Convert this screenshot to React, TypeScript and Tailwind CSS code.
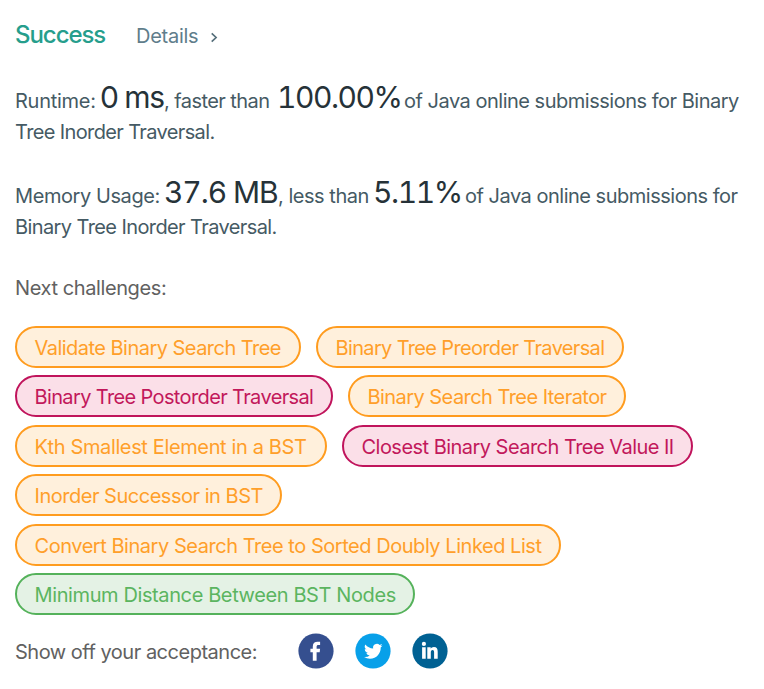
import React from "react";

type Level = "medium" | "hard" | "easy";

const tone: Record<Level, string> = {
  medium: "border-[#ff9c1f] bg-[#fff0dc] text-[#ff9f2a]",
  hard: "border-[#c0145c] bg-[#fbdfe8] text-[#c2185b]",
  easy: "border-[#55b25b] bg-[#e4f2e5] text-[#5bb560]",
};

type Challenge = { label: string; level: Level; size: string };

const rows: { height: string; items: Challenge[] }[] = [
  {
    height: "h-[49px]",
    items: [
      { label: "Validate Binary Search Tree", level: "medium", size: "w-[286px] tracking-[-0.53px]" },
      { label: "Binary Tree Preorder Traversal", level: "medium", size: "w-[308px] tracking-[-0.65px]" },
    ],
  },
  {
    height: "h-[50px]",
    items: [
      { label: "Binary Tree Postorder Traversal", level: "hard", size: "w-[318px] tracking-[-0.63px]" },
      { label: "Binary Search Tree Iterator", level: "medium", size: "w-[278px] tracking-[-0.55px]" },
    ],
  },
  {
    height: "h-[49px]",
    items: [
      { label: "Kth Smallest Element in a BST", level: "medium", size: "w-[312px] tracking-[-0.37px]" },
      { label: "Closest Binary Search Tree Value II", level: "hard", size: "w-[351px] tracking-[-0.53px]" },
    ],
  },
  {
    height: "h-[50px]",
    items: [{ label: "Inorder Successor in BST", level: "medium", size: "w-[267px] tracking-[-0.48px]" }],
  },
  {
    height: "h-[49px]",
    items: [
      {
        label: "Convert Binary Search Tree to Sorted Doubly Linked List",
        level: "medium",
        size: "w-[546px] tracking-[-0.46px]",
      },
    ],
  },
  {
    height: "h-[42px]",
    items: [{ label: "Minimum Distance Between BST Nodes", level: "easy", size: "w-[400px] tracking-[-0.39px]" }],
  },
];

export default function App() {
  return (
    <main className="h-[689px] w-[764px] overflow-hidden bg-white pl-[15px] pt-[20px] font-['Inter',sans-serif] text-[20px] leading-[31px] tracking-[-0.27px] whitespace-nowrap text-[#455a64]">
      <header className="flex h-[30px] items-baseline">
        <span className="w-[121px] text-[24px] leading-[30px] font-medium tracking-[-1.05px] text-[#269e8c]">Success</span>
        <span className="w-[74px] leading-[30px] text-[#607d8b]">Details</span>
        <svg width="8" height="11" viewBox="0 0 8 12" fill="none" stroke="#546e7a" strokeWidth="1.8">
          <path d="M1.5 1.5 6.3 6 1.5 10.5" />
        </svg>
      </header>

      <p className="mt-[31px] h-[67px]">
        <span className="flex h-[36px] items-baseline leading-[33px]">
          <span className="w-[85px]">Runtime:</span>
          <span className="w-[64px] text-[30px] tracking-[-1.5px] text-[#263238]">0 ms</span>
          <span className="w-[113px] tracking-[-0.57px]">, faster than</span>
          <span className="w-[127px] text-[30px] tracking-[-1.45px] text-[#263238] tabular-nums">100.00%</span>
          <span className="tracking-[-0.49px]">of Java online submissions for Binary</span>
        </span>
        <span className="block tracking-[-0.63px]">Tree Inorder Traversal.</span>
      </p>

      <p className="mt-[28px] h-[67px]">
        <span className="flex h-[36px] items-baseline leading-[33px]">
          <span className="w-[149px] tracking-[-0.42px]">Memory Usage:</span>
          <span className="w-[114px] text-[30px] tracking-[-1.1px] text-[#263238] tabular-nums">37.6 MB</span>
          <span className="w-[95px] tracking-[-0.47px]">, less than</span>
          <span className="w-[92px] text-[30px] tracking-[-1.4px] text-[#263238] tabular-nums">5.11%</span>
          <span className="tracking-[-0.49px]">of Java online submissions for</span>
        </span>
        <span className="block tracking-[-0.6px]">Binary Tree Inorder Traversal.</span>
      </p>

      <h2 className="mt-[30px] h-[31px] font-normal tracking-[-0.4px] text-[#616161]">Next challenges:</h2>

      <section className="mt-[22px] h-[289px]">
        {rows.map((row, i) => (
          <div key={i} className={`flex items-start gap-[15px] ${row.height}`}>
            {row.items.map((item) => (
              <a
                key={item.label}
                className={`flex h-[42px] shrink-0 items-center rounded-full border-2 pt-[3px] pl-[17.5px] ${tone[item.level]} ${item.size}`}
              >
                {item.label}
              </a>
            ))}
          </div>
        ))}
      </section>

      <footer className="mt-[18px] flex h-[36px] items-center text-[#616161]">
        <span className="w-[283px] pt-[2px] tracking-[-0.49px]">Show off your acceptance:</span>
        <span className="flex gap-[21px]">
          <svg width="36" height="36" viewBox="0 0 36 36">
            <circle cx="18" cy="18" r="17.6" fill="#354f8f" />
            <path fill="#fff" d="M14.8 27.8v-8.6h-2.4v-3.5h2.4v-2.2c0-3.3 2-4.7 4.8-4.7h2.5v3.3h-1.6c-1.4 0-1.9.7-1.9 1.7v1.9h3.5l-.4 3.5h-3.1v8.6z" />
          </svg>
          <svg width="36" height="36" viewBox="0 0 36 36">
            <circle cx="18" cy="18" r="17.6" fill="#08a0e9" />
            <path
              fill="#fff"
              transform="translate(9.1 9) scale(.77)"
              d="M23.95 4.57a10 10 0 0 1-2.82.78 4.96 4.96 0 0 0 2.16-2.72c-.95.56-2 .96-3.13 1.19a4.92 4.92 0 0 0-8.38 4.48A13.9 13.9 0 0 1 1.64 3.16a4.92 4.92 0 0 0 1.52 6.57 4.9 4.9 0 0 1-2.23-.61v.06a4.92 4.92 0 0 0 3.95 4.83 5 5 0 0 1-2.21.08 4.94 4.94 0 0 0 4.6 3.42A9.87 9.87 0 0 1 0 19.54a14 14 0 0 0 7.55 2.21c9.05 0 14-7.5 14-13.98 0-.21 0-.42-.02-.63a9.94 9.94 0 0 0 2.42-2.57z"
            />
          </svg>
          <svg width="36" height="36" viewBox="0 0 36 36">
            <circle cx="18" cy="18" r="17.6" fill="#006193" />
            <g fill="#fff">
              <circle cx="11.9" cy="10.9" r="2.1" />
              <path d="M10.1 14.2h3.6v11.5h-3.6zM15.3 14.2h3.4v1.5c.6-1.1 1.7-1.8 3.2-1.8 2.9 0 3.8 1.9 3.8 4.8v7h-3.6v-6.3c0-1.5-.3-2.4-1.5-2.4-1.3 0-1.8 1-1.8 2.4v6.3h-3.5z" />
            </g>
          </svg>
        </span>
      </footer>
    </main>
  );
}
